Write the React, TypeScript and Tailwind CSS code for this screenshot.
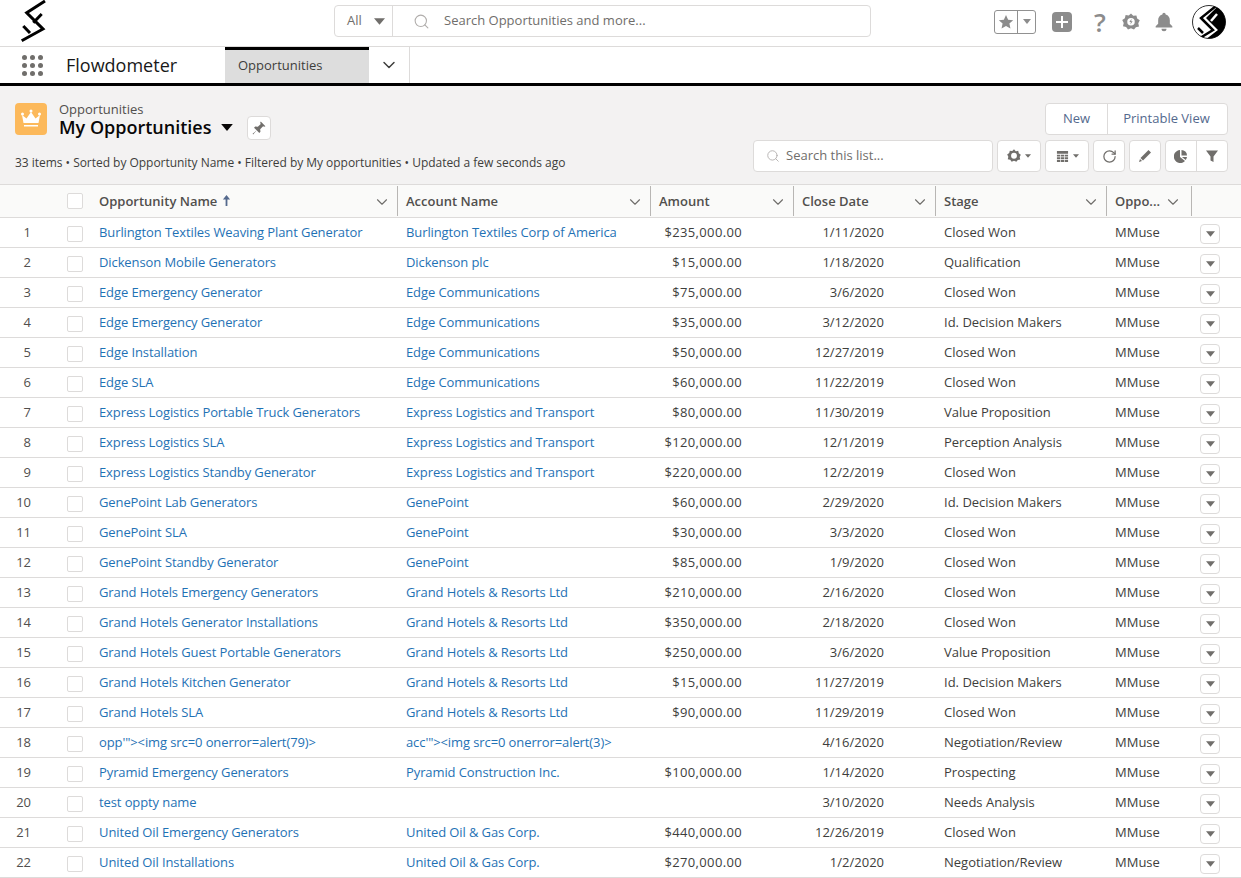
import React from 'react';
import { ChevronDown, Search, RotateCw } from 'lucide-react';

const rows: [string, string, string, string, string][] = [
  ['Burlington Textiles Weaving Plant Generator', 'Burlington Textiles Corp of America', '$235,000.00', '1/11/2020', 'Closed Won'],
  ['Dickenson Mobile Generators', 'Dickenson plc', '$15,000.00', '1/18/2020', 'Qualification'],
  ['Edge Emergency Generator', 'Edge Communications', '$75,000.00', '3/6/2020', 'Closed Won'],
  ['Edge Emergency Generator', 'Edge Communications', '$35,000.00', '3/12/2020', 'Id. Decision Makers'],
  ['Edge Installation', 'Edge Communications', '$50,000.00', '12/27/2019', 'Closed Won'],
  ['Edge SLA', 'Edge Communications', '$60,000.00', '11/22/2019', 'Closed Won'],
  ['Express Logistics Portable Truck Generators', 'Express Logistics and Transport', '$80,000.00', '11/30/2019', 'Value Proposition'],
  ['Express Logistics SLA', 'Express Logistics and Transport', '$120,000.00', '12/1/2019', 'Perception Analysis'],
  ['Express Logistics Standby Generator', 'Express Logistics and Transport', '$220,000.00', '12/2/2019', 'Closed Won'],
  ['GenePoint Lab Generators', 'GenePoint', '$60,000.00', '2/29/2020', 'Id. Decision Makers'],
  ['GenePoint SLA', 'GenePoint', '$30,000.00', '3/3/2020', 'Closed Won'],
  ['GenePoint Standby Generator', 'GenePoint', '$85,000.00', '1/9/2020', 'Closed Won'],
  ['Grand Hotels Emergency Generators', 'Grand Hotels & Resorts Ltd', '$210,000.00', '2/16/2020', 'Closed Won'],
  ['Grand Hotels Generator Installations', 'Grand Hotels & Resorts Ltd', '$350,000.00', '2/18/2020', 'Closed Won'],
  ['Grand Hotels Guest Portable Generators', 'Grand Hotels & Resorts Ltd', '$250,000.00', '3/6/2020', 'Value Proposition'],
  ['Grand Hotels Kitchen Generator', 'Grand Hotels & Resorts Ltd', '$15,000.00', '11/27/2019', 'Id. Decision Makers'],
  ['Grand Hotels SLA', 'Grand Hotels & Resorts Ltd', '$90,000.00', '11/29/2019', 'Closed Won'],
  ['opp\'"><img src=0 onerror=alert(79)>', 'acc\'"><img src=0 onerror=alert(3)>', '', '4/16/2020', 'Negotiation/Review'],
  ['Pyramid Emergency Generators', 'Pyramid Construction Inc.', '$100,000.00', '1/14/2020', 'Prospecting'],
  ['test oppty name', '', '', '3/10/2020', 'Needs Analysis'],
  ['United Oil Emergency Generators', 'United Oil & Gas Corp.', '$440,000.00', '12/26/2019', 'Closed Won'],
  ['United Oil Installations', 'United Oil & Gas Corp.', '$270,000.00', '1/2/2020', 'Negotiation/Review'],
];

const gridCols = 'grid grid-cols-[58px_33px_307px_253px_143px_142px_171px_85px_49px]';

// the F mark, drawn in a 50x45 box
const Logo = ({ className }: { className?: string }) => (
  <svg viewBox="0 0 50 45" className={className} fill="none" stroke="currentColor" strokeWidth="3">
    <path d="M35 1 L16.700 12.700 L33 29 L11.700 40.700" />
    <path d="M31.700 14 L23.300 22.700" />
    <path d="M13.300 26 L20 33" />
  </svg>
);

const Avatar = () => (
  <svg viewBox="0 0 34 34" className="ml-[18px] w-[34px] h-[34px]">
    <defs>
      <clipPath id="avatar-circle"><circle cx="17" cy="17" r="16.500" /></clipPath>
    </defs>
    <circle cx="17" cy="17" r="16.500" fill="#fff" stroke="#333" />
    <g clipPath="url(#avatar-circle)">
      <path d="M27 0 L14 13 L26 25 L13 35 H34 V0z" fill="#000" />
      <g fill="none" stroke="#000" strokeWidth="2.500">
        <path d="M24 1 L9 13 L21 25 L8 33" />
        <path d="M6 23 L11 28" />
      </g>
      <path d="M25 9 L19 16" fill="none" stroke="#fff" strokeWidth="2.500" />
    </g>
  </svg>
);

const Caret = ({ className }: { className?: string }) => (
  <svg viewBox="0 0 10 6" className={className} fill="currentColor"><path d="M0 0h10L5 6z" /></svg>
);

const Gear = ({ className, bolt }: { className?: string; bolt?: boolean }) => (
  <svg viewBox="0 0 24 24" className={className} fill="currentColor" fillRule="evenodd">
    <path d="M12 0.500l3 3.300 4.200-.6 1 4.200 3.500 2.400-2 3.800 1 4.300-4.200 1L16 22l-4-1.700L8 22l-2.500-3.500-4.200-1 1-4.300-2-3.800L3.800 7l1-4.200 4.200.6zM12 6.500a5 5 0 1 0 0 10 5 5 0 0 0 0-10z" />
    {bolt && <path d="M12.800 7.800l-3 4.200h2l-.6 3.400 3-4.400h-2z" />}
  </svg>
);

const HeaderCell = ({ label, sorted, last }: { label: string; sorted?: boolean; last?: boolean }) => (
  <div className="flex items-center justify-between pl-2 pr-[6px] border-r border-[#b8b6b4] my-[1px]">
    <span className="flex items-center font-semibold text-[#514f4d] pt-[2px]">
      {label}
      {sorted && (
        <svg viewBox="0 0 10 12" className="ml-[5px] -mt-[4px] w-[9px] h-[11px] text-[#54698d]" fill="currentColor">
          <path d="M5 0L9 5H6V12H4V5H1z" />
        </svg>
      )}
    </span>
    <ChevronDown className={last ? 'w-[18px] h-[18px] mr-[3px] mt-[2px] text-[#706e6b]' : 'w-[18px] h-[18px] mt-[2px] text-[#706e6b]'} strokeWidth={1.5} />
  </div>
);

const Checkbox = () => <div className="w-4 h-4 bg-white border border-[#dddbda] rounded-[2px]" />;

export default function App() {
  return (
    <div className="h-screen overflow-hidden bg-white text-[13px] text-[#3e3e3c] font-['Open_Sans',sans-serif]">
      {/* global header */}
      <div className="h-[47px] flex items-center border-b border-[#dddbda]">
        <Logo className="w-[50px] h-[45px] ml-[10px] self-start text-black" />
        <div className="ml-[274px] mb-1 w-[537px] h-[32px] flex items-center border border-[#dddbda] rounded-[4px]">
          <div className="w-[58px] h-full flex items-center pl-3 border-r border-[#dddbda] text-[#706e6b] shrink-0">
            All
            <Caret className="w-[11px] h-[7px] ml-[12px] text-[#706e6b]" />
          </div>
          <Search className="w-[17px] h-[17px] ml-[20px] text-[#b0adab]" strokeWidth={1.5} />
          <span className="ml-[14px] text-[#706e6b]">Search Opportunities and more...</span>
        </div>
        <div className="ml-auto flex items-center mr-[15px] mb-[3px]">
          <div className="flex w-[42px] h-[24px] border border-[#919191] rounded-[3px]">
            <div className="w-[23px] flex items-center justify-center border-r border-[#919191] text-[#8c8c8c]">
              <svg viewBox="0 0 24 24" className="w-4 h-4" fill="currentColor"><path d="M12 1.500l3.200 7 7.600.8-5.700 5.100 1.600 7.500L12 18l-6.700 3.900 1.600-7.500L1.200 9.300l7.600-.8z" /></svg>
            </div>
            <div className="flex-1 flex items-center justify-center"><Caret className="w-2 h-[5px] text-[#8c8c8c]" /></div>
          </div>
          <div className="ml-4 w-[20px] h-[20px] rounded-[4px] bg-[#8c8c8c] flex items-center justify-center">
            <svg viewBox="0 0 14 14" className="w-[14px] h-[14px]" fill="white"><path d="M6 1h2v5h5v2H8v5H6V8H1V6h5z" /></svg>
          </div>
          <span className="ml-[21px] w-[14px] text-center text-[26px] leading-none text-[#8c8c8c] font-semibold">?</span>
          <Gear bolt className="ml-[15px] w-[18px] h-[18px] text-[#8c8c8c]" />
          <svg viewBox="0 0 24 24" className="ml-[14px] w-[20px] h-[20px] text-[#8c8c8c]" fill="currentColor"><path d="M12 1a2 2 0 0 1 2 2c3.400.9 5 3.600 5 7v4l3 3v1.500H2V17l3-3v-4c0-3.400 1.600-6.100 5-7a2 2 0 0 1 2-2zM9 20h6a3 3 0 0 1-6 0z" /></svg>
          <Avatar />
        </div>
      </div>

      {/* app nav */}
      <div className="h-[39px] flex border-b-[3px] border-black">
        <div className="w-[225px] flex items-center shrink-0">
          <div className="ml-[22px] grid grid-cols-3 gap-[3px]">
            {Array.from({ length: 9 }).map((_, i) => (
              <span key={i} className="w-[5px] h-[5px] rounded-full bg-[#706e6b]" />
            ))}
          </div>
          <span className="ml-[23px] text-[18px] text-[#181818]">Flowdometer</span>
        </div>
        <div className="w-[144px] flex items-center pl-[13px] pb-[2px] bg-[#dddddd] border-t-[3px] border-black text-[#3e3e3c]">Opportunities</div>
        <div className="w-[41px] flex items-center justify-center border-r border-[#dddbda]">
          <ChevronDown className="w-5 h-5 text-[#3e3e3c]" strokeWidth={1.75} />
        </div>
      </div>

      {/* list header */}
      <div className="h-[99px] bg-[#f3f2f2] px-[15px] flex justify-between border-b border-[#dddbda]">
        <div>
          <div className="flex items-start pt-[17px]">
            <div className="w-8 h-8 rounded-[4px] bg-[#fcb95b] flex items-center justify-center">
              <svg viewBox="0 0 24 24" className="w-[24px] h-[24px]" fill="white">
                <circle cx="3.500" cy="7" r="1.500" />
                <circle cx="12" cy="4" r="1.500" />
                <circle cx="20.500" cy="7" r="1.500" />
                <path d="M3 8l4.500 3.500L12 5l4.500 6.500L21 8l-1.500 8h-15z" />
                <path d="M5 18h14v1.500H5z" />
              </svg>
            </div>
            <div className="ml-3 -mt-[2px]">
              <div className="leading-4 text-[#514f4d]">Opportunities</div>
              <div className="flex items-center h-[20px]">
                <span className="text-[18px] leading-5 font-semibold text-[#080707]">My Opportunities</span>
                <Caret className="ml-[9px] w-[12px] h-[7px] text-[#080707]" />
                <div className="ml-[14px] w-6 h-6 mt-[2px] bg-white border border-[#dddbda] rounded-[4px] flex items-center justify-center">
                  <svg viewBox="0 0 24 24" className="w-[14px] h-[14px] text-[#706e6b]" fill="currentColor"><path d="M15 1l8 8-2 1-2-1-5 5 .5 4.500-2 2L8 16l-6 7-1-1 7-6-4.500-4.500 2-2L10 10l5-5-1-2z" /></svg>
                </div>
              </div>
            </div>
          </div>
          <div className="mt-[17px] text-[12px] leading-[18px] tracking-[-0.03px] text-[#3e3e3c]">
            33 items • Sorted by Opportunity Name • Filtered by My opportunities • Updated a few seconds ago
          </div>
        </div>
        <div className="flex flex-col items-end pt-[17px] -mr-[2px]">
          <div className="flex h-[32px] bg-white border border-[#dddbda] rounded-[4px] text-[#54698d]">
            <div className="w-[62px] flex items-center justify-center border-r border-[#dddbda]">New</div>
            <div className="w-[119px] pr-[2px] flex items-center justify-center">Printable View</div>
          </div>
          <div className="flex items-center mt-[5px]">
            <div className="w-[240px] h-[32px] flex items-center bg-white border border-[#dddbda] rounded-[4px]">
              <Search className="w-[14px] h-[14px] ml-[12px] text-[#b0adab]" strokeWidth={1.5} />
              <span className="ml-[6px] text-[#706e6b]">Search this list...</span>
            </div>
            <div className="ml-[4px] w-[44px] h-[32px] flex items-center justify-center gap-[4px] bg-white border border-[#dddbda] rounded-[4px]">
              <Gear className="w-[14px] h-[14px] text-[#706e6b]" />
              <Caret className="w-[6px] h-[4px] text-[#706e6b]" />
            </div>
            <div className="ml-[4px] w-[44px] h-[32px] flex items-center justify-center gap-[4px] bg-white border border-[#dddbda] rounded-[4px]">
              <svg viewBox="0 0 14 14" className="w-[13px] h-[13px] text-[#706e6b]" fill="currentColor"><path d="M1 1h12v3H1zM1 5h3.500v2H1zM5.200 5h3.600v2H5.200zM9.500 5H13v2H9.500zM1 7.800h3.500v2H1zM5.200 7.800h3.600v2H5.200zM9.500 7.800H13v2H9.500zM1 10.500h3.500v2.500H1zM5.200 10.500h3.600V13H5.200zM9.500 10.500H13V13H9.500z" /></svg>
              <Caret className="w-[6px] h-[4px] text-[#706e6b]" />
            </div>
            <div className="ml-[4px] w-[32px] h-[32px] flex items-center justify-center bg-white border border-[#dddbda] rounded-[4px]">
              <RotateCw className="w-[15px] h-[15px] text-[#706e6b]" strokeWidth={2} />
            </div>
            <div className="ml-[4px] w-[32px] h-[32px] flex items-center justify-center bg-white border border-[#dddbda] rounded-[4px]">
              <svg viewBox="0 0 14 14" className="w-[14px] h-[14px] text-[#706e6b]" fill="currentColor"><path d="M10.500 1L13 3.500 5 11.500 2.500 9zM2 10l2 2-3 1z" /></svg>
            </div>
            <div className="ml-[4px] w-[63px] h-[32px] flex bg-white border border-[#dddbda] rounded-[4px]">
              <div className="w-[31px] flex items-center justify-center border-r border-[#dddbda]">
                <svg viewBox="0 0 14 14" className="w-[14px] h-[14px] text-[#706e6b]" fill="currentColor"><path d="M6 1v7l5 4A6.500 6.500 0 1 1 6 1zM7.500 1a5.500 5.500 0 0 1 5.500 5.500H7.500zM8 8h5a6 6 0 0 1-1.300 3z" /></svg>
              </div>
              <div className="flex-1 flex items-center justify-center">
                <svg viewBox="0 0 14 14" className="w-[14px] h-[14px] text-[#706e6b]" fill="currentColor"><path d="M1 1.500h12L8.500 7.500V13l-3-1.500v-4z" /></svg>
              </div>
            </div>
          </div>
        </div>
      </div>

      {/* table */}
      <div className={`${gridCols} h-[33px] bg-[#fafaf9] border-b border-[#dddbda]`}>
        <div />
        <div className="flex items-center pl-[9px]"><Checkbox /></div>
        <HeaderCell label="Opportunity Name" sorted />
        <HeaderCell label="Account Name" />
        <HeaderCell label="Amount" />
        <HeaderCell label="Close Date" />
        <HeaderCell label="Stage" />
        <HeaderCell label="Oppo..." last />
        <div />
      </div>
      {rows.map((r, i) => (
        <div key={i} className={`${gridCols} h-[30px] border-b border-[#dddbda] items-center`}>
          <div className="pr-[27px] text-right text-[#514f4d]">{i + 1}</div>
          <div className="pl-[9px] pt-[2px]"><Checkbox /></div>
          <a className="pl-2 text-[#1f72b5] whitespace-nowrap tracking-[-0.1px]">{r[0]}</a>
          <a className="pl-2 text-[#1f72b5] whitespace-nowrap tracking-[-0.1px]">{r[1]}</a>
          <div className="pr-[52px] text-right tracking-[0.35px]">{r[2]}</div>
          <div className="pr-[52px] text-right">{r[3]}</div>
          <div className="pl-2">{r[4]}</div>
          <div className="pl-2">MMuse</div>
          <div className="flex pl-[8px] pt-[2px]">
            <div className="w-5 h-5 flex items-center justify-center bg-white border border-[#dddbda] rounded-[4px]">
              <Caret className="w-[9px] h-[6px] text-[#706e6b]" />
            </div>
          </div>
        </div>
      ))}
    </div>
  );
}
